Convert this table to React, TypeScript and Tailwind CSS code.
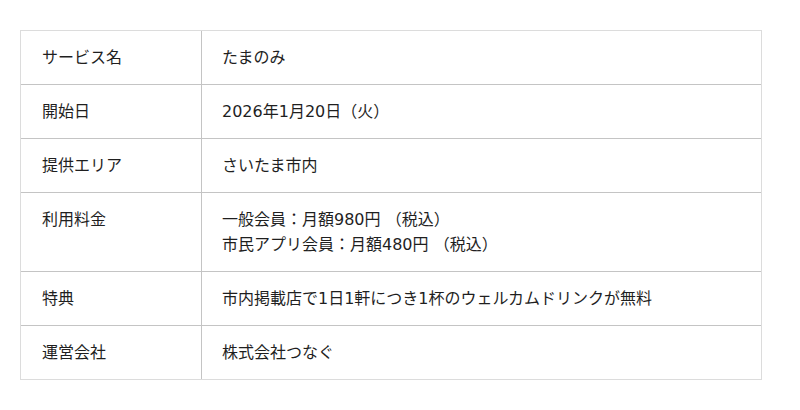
const rows: { label: string; value: string[] }[] = [
  { label: "サービス名", value: ["たまのみ"] },
  { label: "開始日", value: ["2026年1月20日（火）"] },
  { label: "提供エリア", value: ["さいたま市内"] },
  {
    label: "利用料金",
    value: ["一般会員：月額980円 （税込）", "市民アプリ会員：月額480円 （税込）"],
  },
  { label: "特典", value: ["市内掲載店で1日1軒につき1杯のウェルカムドリンクが無料"] },
  { label: "運営会社", value: ["株式会社つなぐ"] },
];

export default function App() {
  return (
    <main className="min-h-screen bg-white px-5 pt-[30px] [font-family:'DejaVu_Sans','Noto_Sans_CJK_JP',sans-serif] text-base leading-[25px] text-[#1f1f1f]">
      <div className="w-[742px] border border-[#dcdcdc]">
        {rows.map((row, index) => (
          <div
            className={
              index === 0
                ? "grid grid-cols-[181px_1fr]"
                : "grid grid-cols-[181px_1fr] border-t border-[#c4c4c4]"
            }
            key={row.label}
          >
            <div className="border-r border-[#c4c4c4] px-[21px] py-[14px]">
              {row.label}
            </div>
            <div className="px-[20px] py-[14px]">
              {row.value.map((line) => (
                <p key={line}>{line}</p>
              ))}
            </div>
          </div>
        ))}
      </div>
    </main>
  );
}
